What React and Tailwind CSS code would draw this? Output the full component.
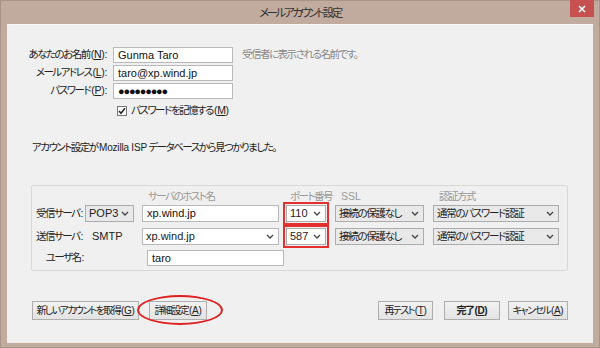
import React from 'react';

const font = "font-['Liberation_Sans','Noto_Sans_CJK_JP',sans-serif] [font-feature-settings:'palt']";
const jp = 'text-[10.5px] tracking-[-1.5px] whitespace-nowrap';

// mnemonic such as (N) — latin part keeps normal spacing
function M({ k, colon }) {
  return (
    <span className="tracking-[-0.3px] ml-[1px]">
      (<span className="underline underline-offset-1">{k}</span>){colon ? ':' : ''}
    </span>
  );
}

function Chevron() {
  return (
    <svg width="8" height="5" viewBox="0 0 8 5" className="shrink-0">
      <path d="M1 1 L4 4 L7 1" fill="none" stroke="#444" strokeWidth="1.3" />
    </svg>
  );
}

function Select({ value, w, white, jpText, className = '' }) {
  return (
    <div
      className={`h-[17px] shrink-0 flex items-center justify-between pl-[3px] pr-[4px] border border-[#acacac] text-[#222] ${white ? 'bg-white' : 'bg-[#e9e9e9]'} ${className}`}
      style={{ width: w }}
    >
      <span className={`leading-none ${jpText ? 'text-[10.5px] tracking-[-1.3px] whitespace-nowrap' : 'text-[11px]'}`}>{value}</span>
      <Chevron />
    </div>
  );
}

function Input({ value, w, h = 16, children }) {
  return (
    <div
      className="flex items-center pl-[4px] bg-white border border-[#b9b9b9] text-[11px] text-[#111] shrink-0"
      style={{ width: w, height: h }}
    >
      {children || value}
    </div>
  );
}

function Btn({ children, w, bold }) {
  return (
    <div
      className={`h-[19px] flex items-center justify-center border border-[#adadad] bg-gradient-to-b from-[#f2f2f2] to-[#e3e3e3] text-[10px] tracking-[-1.6px] whitespace-nowrap text-[#222] ${bold ? 'font-bold' : ''}`}
      style={{ width: w }}
    >
      {children}
    </div>
  );
}

export default function App() {
  return (
    <div className={`w-[600px] h-[348px] bg-[#c0ab9e] border border-[#a89587] flex flex-col ${font}`}>
      {/* title bar */}
      <div className="relative h-[23px] flex items-center justify-center">
        <span className="text-[11.5px] tracking-[-2.4px] text-[#333] pt-[2px]">メールアカウント設定</span>
        <div className="absolute right-[5px] top-[-1px] w-[24px] h-[17px] bg-[#c75050] flex items-center justify-center">
          <svg width="8" height="8" viewBox="0 0 8 8">
            <path d="M1 1 L7 7 M7 1 L1 7" stroke="#fff" strokeWidth="1.6" />
          </svg>
        </div>
      </div>

      {/* client */}
      <div className="mx-[6px] h-[319px] bg-[#f0f0f0] border-t border-[#fafafa] flex flex-col text-[#222]">
        {/* account form */}
        <div className="pt-[22px] flex flex-col gap-[2px]">
          <div className="flex items-center h-[16px]">
            <div className={`w-[100px] text-right ${jp}`}>あなたのお名前<M k="N" colon /></div>
            <div className="ml-[6px]"><Input value="Gunma Taro" w={120} /></div>
            <div className={`ml-[9px] text-[#888] ${jp}`}>受信者に表示される名前です。</div>
          </div>
          <div className="flex items-center h-[16px]">
            <div className={`w-[100px] text-right ${jp}`}>メールアドレス<M k="L" colon /></div>
            <div className="ml-[6px]"><Input value="taro@xp.wind.jp" w={120} /></div>
          </div>
          <div className="flex items-center h-[16px]">
            <div className={`w-[100px] text-right ${jp}`}>パスワード<M k="P" colon /></div>
            <div className="ml-[6px]">
              <Input w={120}>
                <span className="text-[11px] tracking-[-1.2px] leading-none">●●●●●●●●●</span>
              </Input>
            </div>
          </div>
          <div className="flex items-center h-[16px] mt-[2px]">
            <div className="ml-[110px] w-[10px] h-[10px] bg-white border border-[#777] flex items-center justify-center">
              <svg width="8" height="8" viewBox="0 0 8 8">
                <path d="M1 4 L3 6.3 L7 1.3" fill="none" stroke="#222" strokeWidth="1.5" />
              </svg>
            </div>
            <span className={`ml-[4px] ${jp}`}>パスワードを記憶する<M k="M" /></span>
          </div>
        </div>

        <div className={`mt-[21px] ml-[25px] leading-[14px] ${jp}`}>
          アカウント設定が <span className="text-[10px] tracking-[-0.2px]">Mozilla ISP</span> データベースから見つかりました。
        </div>

        {/* server group */}
        <div className="mt-[30px] ml-[24px] w-[537px] h-[86px] border border-[#d8d8d8] rounded-[2px] bg-[#f0f0f0] flex flex-col">
          <div className={`relative h-[14px] mt-[4px] leading-[12px] text-[#999] ${jp}`}>
            <span className="absolute left-[116px]">サーバのホスト名</span>
            <span className="absolute left-[258px]">ポート番号</span>
            <span className="absolute left-[309px] tracking-normal">SSL</span>
            <span className="absolute left-[407px]">認証方式</span>
          </div>

          <div className="flex items-center h-[17px] mt-[1px]">
            <div className={`w-[53px] shrink-0 pl-[4px] ${jp}`}>受信サーバ<span className="ml-[1px]">:</span></div>
            <Select value="POP3" w={49} />
            <div className="ml-[8px]"><Input value="xp.wind.jp" w={137} h={17} /></div>
            <Select value="110" w={40} white className="ml-[7px] outline-2 outline-[#e3302f] outline-offset-[1px]" />
            <Select value="接続の保護なし" jpText w={89} className="ml-[9px]" />
            <Select value="通常のパスワード認証" jpText w={126} className="ml-[9px]" />
          </div>

          <div className="flex items-center h-[17px] mt-[6px]">
            <div className={`w-[53px] shrink-0 pl-[4px] ${jp}`}>送信サーバ<span className="ml-[1px]">:</span></div>
            <div className="w-[49px] shrink-0 pl-[7px] text-[11px]">SMTP</div>
            <Select value="xp.wind.jp" w={137} white className="ml-[8px] border-[#b9b9b9]" />
            <Select value="587" w={40} white className="ml-[7px] outline-2 outline-[#e3302f] outline-offset-[1px]" />
            <Select value="接続の保護なし" jpText w={89} className="ml-[9px]" />
            <Select value="通常のパスワード認証" jpText w={126} className="ml-[9px]" />
          </div>

          <div className="flex items-center h-[16px] mt-[5px]">
            <div className={`w-[51px] shrink-0 text-right ${jp}`}>ユーザ名<span className="ml-[1px]">:</span></div>
            <div className="ml-[64px]"><Input value="taro" w={137} /></div>
          </div>
        </div>

        {/* buttons */}
        <div className="mt-[30px] flex items-center px-[25px]">
          <Btn w={107}>新しいアカウントを取得<M k="G" /></Btn>
          <div className="relative ml-[10px]">
            <Btn w={58}>詳細設定<M k="A" /></Btn>
            <div className="absolute left-[-12px] top-[-6px] w-[86px] h-[30px] border-2 border-[#e02020] rounded-[50%]" />
          </div>
          <div className="ml-auto flex items-center">
            <Btn w={55}>再テスト<M k="T" /></Btn>
            <div className="ml-[11px]"><Btn w={56} bold>完了<M k="D" /></Btn></div>
            <div className="ml-[8px]"><Btn w={60}>キャンセル<M k="A" /></Btn></div>
          </div>
        </div>
      </div>
    </div>
  );
}
